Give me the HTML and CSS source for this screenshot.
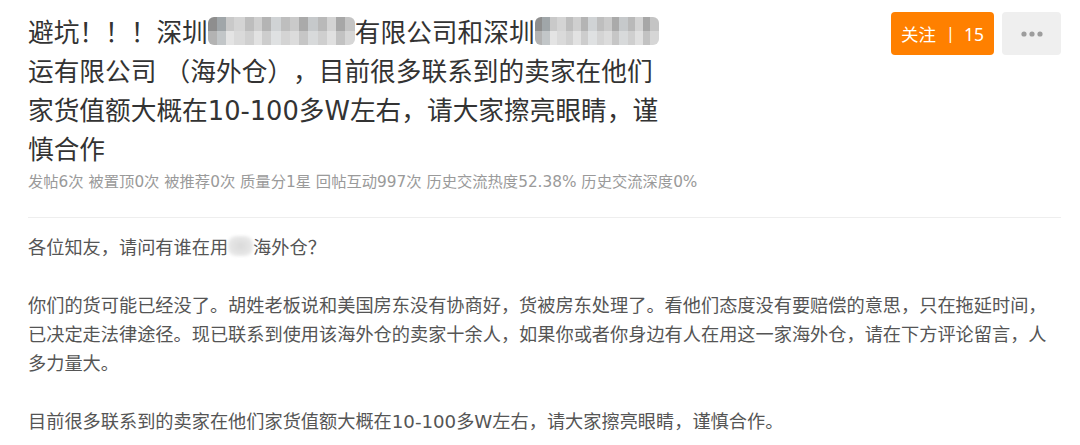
FILE: index.html
```html
<!DOCTYPE html>
<html lang="zh-CN">
<head>
    <meta charset="UTF-8">
    <meta name="viewport" content="width=device-width, initial-scale=1.0">
    <title>避坑！！！深圳有限公司</title>
    <link rel="stylesheet" href="styles.css">
</head>
<body>
    <article class="post">
        <header class="post-header">
            <div class="post-head-main">
                <h1 class="post-title">避坑！！！深圳<span class="mosaic mosaic-a"></span>有限公司和深圳<span class="mosaic mosaic-b"></span>运有限公司 （海外仓），目前很多联系到的卖家在他们家货值额大概在10-100多W左右，请大家擦亮眼睛，谨慎合作</h1>
                <div class="post-meta">发帖6次 被置顶0次 被推荐0次 质量分1星 回帖互动997次 历史交流热度52.38% 历史交流深度0%</div>
            </div>
            <div class="post-actions">
                <button class="btn-follow">关注<span class="sep">|</span>15</button>
                <button class="btn-more" aria-label="更多">
                    <svg width="22" height="6" viewBox="0 0 22 6">
                        <circle cx="3" cy="3" r="2.6" fill="#9d9d9d"/>
                        <circle cx="11" cy="3" r="2.6" fill="#9d9d9d"/>
                        <circle cx="19" cy="3" r="2.6" fill="#9d9d9d"/>
                    </svg>
                </button>
            </div>
        </header>

        <div class="post-body">
            <p>各位知友，请问有谁在用<span class="mosaic mosaic-c"></span>海外仓？</p>
            <p>你们的货可能已经没了。胡姓老板说和美国房东没有协商好，货被房东处理了。看他们态度没有要赔偿的意思，只在拖延时间，已决定走法律途径。现已联系到使用该海外仓的卖家十余人，如果你或者你身边有人在用这一家海外仓，请在下方评论留言，人多力量大。</p>
            <p>目前很多联系到的卖家在他们家货值额大概在10-100多W左右，请大家擦亮眼睛，谨慎合作。</p>
        </div>
    </article>
</body>
</html>
```

FILE: styles.css
```css
body {
    margin: 0;
    background-color: #fff;
    font-family: "DejaVu Sans", "Noto Sans CJK SC", sans-serif;
    color: #333;
    text-spacing-trim: space-all;
}
.post {
    padding: 12px 19px 0 28px;
}
.post-header {
    display: flex;
    align-items: flex-start;
    border-bottom: 1px solid #eee;
    padding-bottom: 23px;
}
.post-head-main {
    flex: 1;
}
.post-title {
    max-width: 640px;
    margin: 2px 0 0;
    font-size: 25.7px;
    font-weight: normal;
    line-height: 39px;
    color: #333;
}
.post-meta {
    font-size: 15.3px;
    line-height: 24px;
    color: #9a9a9a;
    white-space: nowrap;
}
.post-actions {
    display: flex;
    gap: 8px;
}
.btn-follow {
    width: 103px;
    height: 43px;
    display: flex;
    align-items: center;
    justify-content: center;
    border: none;
    border-radius: 4px;
    background-color: #ff8000;
    color: #fff;
    font-family: "Noto Sans", "Noto Sans CJK SC", sans-serif;
    font-size: 17.5px;
    padding: 0;
    cursor: pointer;
}
.btn-follow .sep {
    margin: 0 9px 2px 10px;
    font-size: 16px;
}
.btn-more {
    width: 59px;
    height: 43px;
    display: flex;
    align-items: center;
    justify-content: center;
    border: none;
    border-radius: 4px;
    background-color: #efefef;
    padding: 0;
    cursor: pointer;
}
.post-body {
    padding-top: 15px;
    font-size: 18.2px;
    line-height: 29px;
    color: #555;
}
.post-body p {
    margin: 0 0 29px;
}

/* pixelated cover over the blurred names */
.mosaic {
    display: inline-block;
    border-radius: 6px;
    filter: blur(0.7px);
}
.mosaic-a,
.mosaic-b {
    height: 28px;
    vertical-align: -3px;
    background:
        linear-gradient(90deg, #8e8e8e 0 6%, #a0a6a9 6% 12%, #c9c9c9 12% 18%, #d4d4d4 18% 25%, #bdbdbd 25% 31%, #cfcfcf 31% 37%, #b4b4b4 37% 43%, #d0d3d5 43% 50%, #bebebe 50% 56%, #cacaca 56% 62%, #aaaaaa 62% 68%, #c6c9cb 68% 75%, #b9b9b9 75% 81%, #d3d3d3 81% 87%, #a7a7a7 87% 93%, #c4c4c4 93% 100%) top / 100% 50% no-repeat,
        linear-gradient(90deg, #b3b3b3 0 6%, #c2c6c8 6% 12%, #e4e4e4 12% 18%, #dadada 18% 25%, #d0d0d0 25% 31%, #e2e2e2 31% 37%, #cdcdcd 37% 43%, #dfe1e2 43% 50%, #d4d4d4 50% 56%, #dcdcdc 56% 62%, #c6c6c6 62% 68%, #d8dadb 68% 75%, #cfcfcf 75% 81%, #e0e0e0 81% 87%, #c2c2c2 87% 93%, #d6d6d6 93% 100%) bottom / 100% 50% no-repeat;
}
.mosaic-a {
    width: 147px;
}
.mosaic-b {
    width: 124px;
}
.mosaic-c {
    width: 25px;
    height: 20px;
    vertical-align: -2px;
    border-radius: 8px;
    background: radial-gradient(ellipse at center, #d9d9d9 0%, #e6e6e6 60%, #f4f4f4 100%);
    filter: blur(1.5px);
}
```
